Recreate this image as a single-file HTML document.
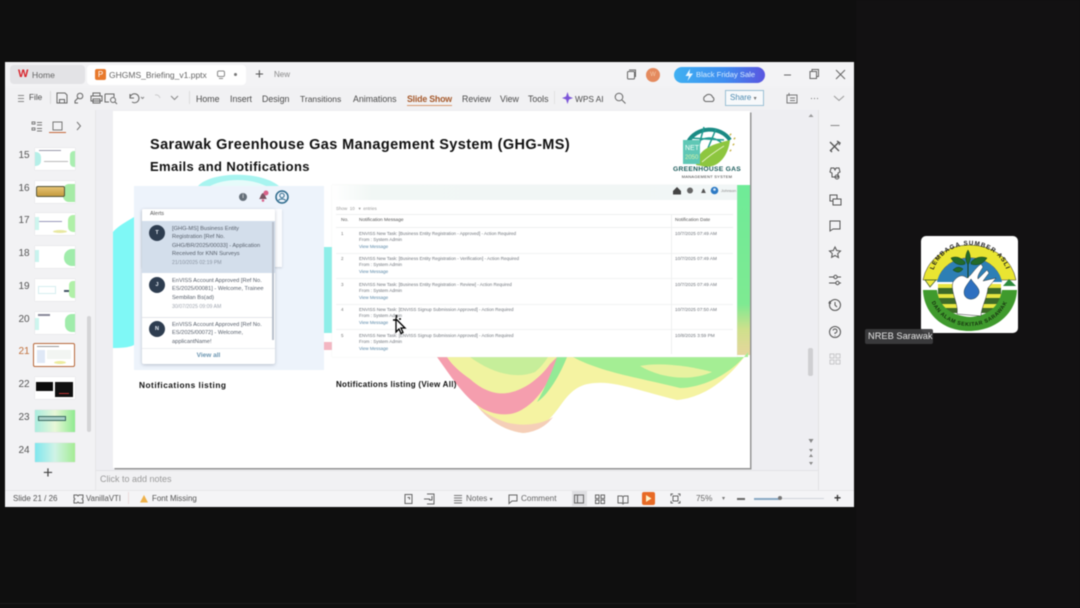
<!DOCTYPE html>
<html><head><meta charset="utf-8"><style>
html,body{margin:0;padding:0;background:#0f0f0f;width:1080px;height:608px;overflow:hidden}
*{box-sizing:border-box}
body{font-family:"Liberation Sans",sans-serif;position:relative}
.a{position:absolute;white-space:nowrap}
#root{position:absolute;left:0;top:0;width:1080px;height:608px;filter:blur(.4px)}
.t{font-size:8.8px;color:#4a4a4a;line-height:12px}
.n{font-size:10px;color:#555;line-height:12px;left:18px;width:12px;text-align:center}
.th{position:absolute;left:35px;width:40px;height:22px;background:#fff;overflow:hidden;box-shadow:0 0 1px #ccc}
.nm{font-size:5.7px;line-height:6.3px;color:#58606c;white-space:nowrap;position:absolute}
.rm{font-size:4.5px;line-height:6.4px;color:#6e737a;white-space:nowrap;position:absolute;left:359px}
.rm i{font-style:normal;color:#5a88a8}
.rd{font-size:4.7px;color:#6e737a;position:absolute;left:675px;white-space:nowrap}
.ri{font-size:4.5px;color:#777;position:absolute;left:341px}
svg{position:absolute;overflow:visible}
</style></head><body><div id="root">
<!-- app window -->
<div class="a" style="left:5px;top:62px;width:849px;height:445px;background:#f1f1f3"></div>
<div class="a" style="left:5px;top:62px;width:849px;height:25px;background:#f3f3f5"></div>
<div class="a" style="left:10px;top:65px;width:75px;height:19px;background:#e3e3e6;border-radius:4px"></div>
<div class="a" style="left:87px;top:65px;width:159px;height:20px;background:#fff;border-radius:4px"></div>
<div class="a" style="left:18px;top:69px;font-size:11px;font-weight:bold;color:#d8242c;line-height:11px">W</div>
<div class="a t" style="left:32px;top:69px;font-size:8.6px;color:#666">Home</div>
<div class="a" style="left:95px;top:69px;width:11px;height:11px;background:#e8792c;border-radius:2px;color:#fff;font-size:8px;line-height:11px;text-align:center">P</div>
<div class="a t" style="left:109px;top:69px;font-size:8.5px;color:#666">GHGMS_Briefing_v1.pptx</div>
<svg style="left:216px;top:70px" width="10" height="10" fill="none" stroke="#8a8a8a"><rect x="1.500" y="1" width="7" height="5.500" rx="1.500"/><path d="M3 8.500h4"/></svg>
<div class="a" style="left:234px;top:73px;width:3px;height:3px;background:#777;border-radius:50%"></div>
<div class="a" style="left:255px;top:67px;font-size:15px;color:#555;line-height:15px">+</div>
<div class="a t" style="left:274px;top:69px;font-size:8px;color:#888">New</div>
<svg style="left:626px;top:69px" width="11" height="11" fill="none" stroke="#666"><rect x="1.500" y="2.500" width="7" height="7.500" rx="1"/><path d="M3 1h6.500v7"/></svg>
<div class="a" style="left:646px;top:68px;width:14px;height:14px;border-radius:50%;background:#e48a5e;color:#f6c9a8;font-size:6px;line-height:14px;text-align:center">W</div>
<div class="a" style="left:674px;top:67px;width:91px;height:16px;border-radius:8px;background:linear-gradient(90deg,#3fb0f2,#3f8ef0 55%,#5a55e0);color:#d8ecff;font-size:7.600px;line-height:16px;padding-left:22px">Black Friday Sale</div>
<svg style="left:684px;top:69px" width="10" height="12"><path d="M6 0L1.500 7H5L3.500 12 9 4.500H5.500z" fill="#e8f6ff"/></svg>
<svg style="left:780px;top:68px" width="66" height="13" fill="none" stroke="#666"><path d="M4 7h7"/><rect x="30" y="3.500" width="6.500" height="7"/><path d="M32 3.500V1.500h6.500v7h-2"/><path d="M56 2l9 9M65 2l-9 9"/></svg>
<!-- ribbon -->
<svg style="left:17px;top:94px" width="8" height="9" stroke="#888"><path d="M1 1.500h6M1 4.500h6M1 7.500h6"/></svg>
<div class="a t" style="left:29px;top:92px;font-size:8.200px">File</div>
<div class="a" style="left:50px;top:91px;width:1px;height:13px;background:#ddd"></div>
<svg style="left:55px;top:91px" width="125" height="14" fill="none" stroke="#666"><path d="M2 2h8l2 2v8H2zM4.500 12V8.500h5V12"/><circle cx="25" cy="5" r="2.800"/><path d="M23 7l-3 3v2h3"/><path d="M38 5V2h7v3M36 5h11v5H36zM38 8h7v4h-7z"/><path d="M50 3h9v3M50 3v8h4"/><circle cx="58" cy="9" r="2.500"/><path d="M60 11l2 2"/><path d="M75 3v4h4M75 7a4.500 4.500 0 1 1 2 4" /><path d="M86 6l1.500 1.500L89 6" stroke="#888"/><path d="M100 4a4 4 0 0 1 5 3" stroke="#ccc"/><path d="M116 5l3.500 3.500L123 5" stroke="#888"/></svg>
<div class="a" style="left:189px;top:91px;width:1px;height:13px;background:#ddd"></div>
<div class="a t" style="left:196px;top:93px">Home</div>
<div class="a t" style="left:230px;top:93px">Insert</div>
<div class="a t" style="left:262px;top:93px">Design</div>
<div class="a t" style="left:300px;top:93px;font-size:8.500px">Transitions</div>
<div class="a t" style="left:353px;top:93px">Animations</div>
<div class="a t" style="left:407px;top:93px;font-weight:bold;color:#a65a2c;letter-spacing:-.2px">Slide Show</div>
<div class="a" style="left:407px;top:105px;width:45px;height:1px;background:#d89a70"></div>
<div class="a t" style="left:462px;top:93px">Review</div>
<div class="a t" style="left:500px;top:93px">View</div>
<div class="a t" style="left:528px;top:93px">Tools</div>
<div class="a" style="left:554px;top:91px;width:1px;height:13px;background:#e2e2e2"></div>
<svg style="left:562px;top:92px" width="11" height="12"><path d="M5.500 0L7 4.500 11 6 7 7.500 5.500 12 4 7.500 0 6 4 4.500z" fill="#7c55d8"/></svg>
<div class="a t" style="left:575px;top:93px;font-size:8.300px">WPS AI</div>
<svg style="left:614px;top:92px" width="12" height="12" fill="none" stroke="#666"><circle cx="5" cy="5" r="3.800"/><path d="M8 8l3.500 3.500"/></svg>
<svg style="left:702px;top:92px" width="13" height="12" fill="none" stroke="#666"><path d="M3.500 9.500a3 3 0 0 1 0-5.500 4 4 0 0 1 7 1 2.500 2.500 0 0 1 0 4.500z"/></svg>
<div class="a" style="left:725px;top:90px;width:39px;height:16px;border:1px solid #9cc0d4;background:#f7f9fb;color:#4c8ab0;font-size:8px;line-height:14px;padding-left:4px">Share <span style="font-size:6px;color:#777">&#9662;</span></div>
<svg style="left:785px;top:92px" width="60" height="13" fill="none" stroke="#777"><path d="M2 3h10v8H2zM4 1v3M5 6h5M5 8.500h5"/><path d="M26 6.500h1M29 6.500h1M32 6.500h1"/><path d="M49 4l5 4.500L59 4" stroke="#999"/></svg>
<!-- left pane -->
<div class="a" style="left:5px;top:110px;width:91px;height:380px;background:#f2f2f4;border-right:1px solid #e6e6e8"></div>
<svg style="left:31px;top:120px" width="55" height="13" fill="none" stroke="#777"><path d="M1 2h3v2H1zM1 8h3v2H1zM6 2.500h5M6 5h5M6 8.500h5M6 11h5" stroke-width=".9"/><rect x="22" y="2" width="9" height="8"/><path d="M46 2l3.500 4L46 10"/></svg>
<div class="a" style="left:49px;top:132px;width:17px;height:1px;background:#c5683a"></div>
<div class="a n" style="top:150px">15</div><div class="a n" style="top:183px">16</div><div class="a n" style="top:215px">17</div><div class="a n" style="top:248px">18</div><div class="a n" style="top:281px">19</div><div class="a n" style="top:314px">20</div><div class="a n" style="top:346px;color:#c0703c">21</div><div class="a n" style="top:379px">22</div><div class="a n" style="top:412px">23</div><div class="a n" style="top:445px">24</div>
<div class="th" style="top:148px"><div class="a" style="left:0;top:4px;width:6px;height:14px;background:#b5efe8;border-radius:0 5px 5px 0"></div><div class="a" style="right:0;top:3px;width:5px;height:16px;background:#a9eeb0;border-radius:4px 0 0 4px"></div><div class="a" style="left:4px;top:2px;width:22px;height:1px;background:#99a"></div><div class="a" style="left:9px;top:13px;width:24px;height:1px;background:#bbb"></div></div>
<div class="th" style="top:181px"><div class="a" style="right:0;top:3px;width:12px;height:18px;background:#a6eba6;border-radius:6px 0 0 6px"></div><div class="a" style="left:1px;top:5px;width:29px;height:11px;background:linear-gradient(#e6c373,#c49a3e);border:1px solid #55553a;border-radius:2px"></div></div>
<div class="th" style="top:213px"><div class="a" style="right:0;top:2px;width:7px;height:17px;background:#b0f0a8;border-radius:5px 0 0 5px"></div><div class="a" style="left:3px;top:8px;width:24px;height:1px;background:#99b"></div><div class="a" style="left:18px;top:17px;width:14px;height:3px;background:#e8e8a0;border-radius:50%"></div><div class="a" style="left:0;top:4px;width:4px;height:13px;background:#cdf5ee"></div></div>
<div class="th" style="top:246px"><div class="a" style="right:0;top:3px;width:11px;height:17px;background:#a0ecab;border-radius:8px 0 0 8px"></div><div class="a" style="left:0;top:4px;width:4px;height:12px;background:#c8f3ee"></div></div>
<div class="th" style="top:279px"><div class="a" style="right:0;top:2px;width:6px;height:17px;background:#b0f0a8;border-radius:4px 0 0 4px"></div><div class="a" style="left:29px;top:11px;width:5px;height:2px;background:#456"></div><div class="a" style="left:3px;top:7px;width:18px;height:8px;border:1px solid #d6eef0"></div></div>
<div class="th" style="top:312px"><div class="a" style="right:0;top:2px;width:10px;height:18px;background:#a0ecab;border-radius:7px 0 0 7px"></div><div class="a" style="left:3px;top:2px;width:12px;height:2px;background:#889"></div><div class="a" style="left:0;top:6px;width:4px;height:12px;background:#cdf5ee"></div></div>
<div class="a" style="left:33px;top:343px;width:42px;height:24px;border:1.500px solid #b8683a;border-radius:2px;background:#fff"><div class="a" style="left:3px;top:6px;width:8px;height:13px;background:#dfe8f6"></div><div class="a" style="left:13px;top:6px;width:24px;height:9px;background:#f2f5f2"></div><div class="a" style="left:3px;top:2px;width:22px;height:1px;background:#999"></div><div class="a" style="left:20px;top:17px;width:12px;height:3px;background:#ecec9c;border-radius:50%"></div></div>
<div class="th" style="top:377px"><div class="a" style="left:1px;top:5px;width:17px;height:9px;background:#0a0a0a"></div><div class="a" style="left:20px;top:5px;width:18px;height:15px;background:#111"></div><div class="a" style="left:24px;top:16px;width:10px;height:1px;background:#b33"></div></div>
<div class="th" style="top:410px;background:linear-gradient(90deg,#a9ecdf,#e8f7d8 50%,#8fea90)"><div class="a" style="left:3px;top:6px;width:28px;height:5px;background:#a8d0c8;border:1px solid #3a6a60"></div></div>
<div class="th" style="top:443px;height:19px;background:linear-gradient(90deg,#7fe6ee,#d0f3e6 50%,#a5ec94)"></div>
<div class="a" style="left:87px;top:316px;width:4px;height:116px;background:#d4d4d6;border-radius:2px"></div>
<div class="a" style="left:43px;top:464px;font-size:17px;line-height:17px;color:#444">+</div>
<!-- canvas -->
<div class="a" style="left:96px;top:110px;width:722px;height:360px;background:#eeeef2"></div>
<div class="a" style="left:96px;top:470px;width:722px;height:20px;background:#f1f1f3;border-top:1px solid #e4e4e6"></div>
<div class="a" style="left:100px;top:473px;font-size:9px;line-height:12px;color:#9a9a9a">Click to add notes</div>
<div class="a" style="left:808px;top:348px;width:5px;height:28px;background:#cfcfd2;border-radius:2px"></div>
<svg style="left:808px;top:113px" width="6" height="6"><path d="M.5 4L3 1l2.500 3" fill="#999"/></svg>
<svg style="left:808px;top:437px" width="6" height="28" fill="#888"><path d="M.5 2h5L3 6z"/><path d="M1 12h4L3 15zM1 13V12M1 20l2-3 2 3zM1 25h4L3 28z"/></svg>
<!-- slide -->
<div class="a" style="left:113px;top:111px;width:637px;height:357px;background:#fff;box-shadow:1.500px 1.500px 0 #959595;overflow:hidden">
<svg style="left:0;top:0" width="637" height="357" viewBox="113 111 637 357">
<defs><linearGradient id="gs" x1="0" x2="0" y1="0" y2="1"><stop offset="0" stop-color="#6feb98"/><stop offset=".7" stop-color="#7eea92"/><stop offset=".85" stop-color="#cfe08c"/><stop offset="1" stop-color="#e6d69c"/></linearGradient></defs>
<path d="M113 232C118 226 126 222 134 217L134 345C128 348 120 348 113 348z" fill="#7ff8f6"/>
<path d="M198 186C210 172 260 170 279 186z" fill="#a8f4f0"/>
<path d="M210 186C225 178 250 178 266 186z" fill="#e6fbfa"/>
<rect x="324" y="247" width="8" height="86" fill="#8eeee8"/>
<rect x="324" y="342" width="8" height="8" fill="#f3b6c2"/>
<rect x="737" y="185" width="13" height="170" fill="url(#gs)"/>
<!-- wave outer -->
<path d="M437 357C450 372 463 387 472 398 482 415 500 430 523 433 538 432 550 420 560 406 570 392 578 384 595 383 615 381 640 391 677 400 700 398 725 384 748 352L748 357z" fill="#f5f3a2"/>
<!-- peach lower rim -->
<path d="M478 407C488 420 505 431 523 433 538 432 548 424 553 417 540 426 515 427 500 420 490 416 484 412 478 407z" fill="#f5cfb8"/>
<!-- upper yellow/green -->
<path d="M447 357C460 372 480 388 497 396 512 398 535 382 550 364L557 357z" fill="#f0f3a0"/>
<path d="M470 357C490 372 515 380 535 372 540 368 545 362 548 357z" fill="#c6ee9a"/>
<!-- pink -->
<path d="M437 357C450 375 462 394 477 405 490 415 510 418 523 409 537 401 551 382 557 357L550 364C540 378 525 389 512 392 495 397 480 388 470 379 460 372 452 365 447 357z" fill="#f59eae"/>
<!-- green strip -->
<path d="M557 357H567C560 375 548 395 537 402 545 388 552 372 557 357z" fill="#93ea96"/>
<path d="M573 357C600 372 640 378 680 388 700 388 730 376 748 352L748 357z" fill="#a4ee94"/>
<path d="M640 366C660 378 690 382 712 372 690 366 660 362 640 366z" fill="#e8f2a0"/>
</svg>
</div>
<div class="a" style="left:150px;top:137px;font-size:14.500px;line-height:17px;font-weight:bold;color:#111;letter-spacing:.4px">Sarawak Greenhouse Gas Management System (GHG-MS)</div>
<div class="a" style="left:150px;top:159px;font-size:13px;line-height:16px;font-weight:bold;color:#111;letter-spacing:.37px">Emails and Notifications</div>
<!-- logo -->
<svg style="left:680px;top:122px" width="60" height="56" viewBox="0 0 60 56">
<path d="M8 20A24 22 0 0 1 50 18" fill="none" stroke="#1a8a84" stroke-width="4"/>
<path d="M13 26A17 15 0 0 1 44 24M24 5l-6 22M36 7L28 26M10 16l34 2" fill="none" stroke="#1f9a90" stroke-width="1.500"/>
<path d="M16 43C18 26 34 22 50 18 48 36 36 48 22 44z" fill="#8dc63f"/>
<path d="M22 40C30 33 36 29 44 24" stroke="#e8f4c8" fill="none"/>
<rect x="3" y="18" width="17" height="24" fill="#5fc7b5"/>
<path d="M50 12l1 1M54 16l1 1M53 22l1 1M50 28l1 1" stroke="#c8b44a" stroke-width="2"/>
<text x="5" y="28" font-family="Liberation Sans" font-size="7" fill="#f2fff8">NET</text>
<text x="5" y="37" font-family="Liberation Sans" font-size="6" fill="#d8f2a8">2050</text>
</svg>
<div class="a" style="left:672px;top:166px;width:70px;text-align:center;font-size:6.700px;line-height:8px;color:#1a5a5a;font-weight:bold;letter-spacing:.3px">GREENHOUSE GAS</div>
<div class="a" style="left:672px;top:174px;width:70px;text-align:center;font-size:4px;line-height:5px;color:#333;letter-spacing:.25px">MANAGEMENT SYSTEM</div>
<!-- left screenshot -->
<div class="a" style="left:134px;top:186px;width:190px;height:184px;background:#edf3fb"></div>
<div class="a" style="left:142px;top:209px;width:140px;height:58px;background:#fbfcfe;box-shadow:0 1px 2px rgba(90,100,120,.25)"></div>
<div class="a" style="left:239px;top:193px;width:8px;height:8px;border-radius:50%;background:#66707a;color:#fff;font-size:6px;line-height:8px;text-align:center">i</div>
<svg style="left:258px;top:190px" width="11" height="13"><path d="M1 9c1.500-1 1.500-5 4-6 2.500 1 2.500 5 4 6z" fill="#7a5563"/><circle cx="8" cy="3" r="2.500" fill="#d8628a"/><circle cx="5" cy="10.500" r="1.300" fill="#d8628a"/></svg>
<svg style="left:275px;top:190px" width="14" height="14" fill="none"><circle cx="7" cy="7" r="6" stroke="#2d6a8c" stroke-width="1.500"/><circle cx="7" cy="5.500" r="2.200" stroke="#2d6a8c"/><path d="M3.500 10.500c1-2 6-2 7 0" stroke="#2d6a8c"/></svg>
<div class="a" style="left:142px;top:209px;width:133px;height:155px;background:#fff;box-shadow:0 1px 3px rgba(90,100,120,.35);border-radius:2px"></div>
<div class="a" style="left:150px;top:211px;font-size:5.500px;line-height:7px;color:#555">Alerts</div>
<div class="a" style="left:142px;top:221px;width:133px;height:52px;background:#d3deeb"></div>
<div class="a" style="left:272px;top:222px;width:2px;height:118px;background:#b8c0cc"></div>
<div class="a" style="left:142px;top:317px;width:130px;height:1px;background:#e4e6ea"></div>
<div class="a" style="left:142px;top:348px;width:133px;height:1px;background:#eceef1"></div>
<div class="a" style="left:149px;top:225px;width:16px;height:16px;border-radius:50%;background:#2e3d50;color:#e8eef6;font-size:5.500px;line-height:16px;text-align:center;font-weight:bold">T</div>
<div class="a" style="left:149px;top:277px;width:16px;height:16px;border-radius:50%;background:#2e3d50;color:#e8eef6;font-size:5.500px;line-height:16px;text-align:center;font-weight:bold">J</div>
<div class="a" style="left:149px;top:321px;width:16px;height:16px;border-radius:50%;background:#2e3d50;color:#e8eef6;font-size:5.500px;line-height:16px;text-align:center;font-weight:bold">N</div>
<div class="nm" style="left:172px;top:225px;line-height:8.400px">[GHG-MS] Business Entity<br>Registration [Ref No.<br>GHG/BR/2025/00033] - Application<br>Received for KNN Surveys</div>
<div class="nm" style="left:172px;top:260px;font-size:5.200px;color:#8a94a2">21/10/2025 02:19 PM</div>
<div class="nm" style="left:172px;top:277px;line-height:8.400px">EnVISS Account Approved [Ref No.<br>ES/2025/00081] - Welcome, Trainee<br>Sembilan Bs(ad)</div>
<div class="nm" style="left:172px;top:304px;font-size:5.200px;color:#a0a6b0">30/07/2025 09:09 AM</div>
<div class="nm" style="left:172px;top:321px;line-height:8.400px">EnVISS Account Approved [Ref No.<br>ES/2025/00072] - Welcome,<br>applicantName!</div>
<div class="a" style="left:142px;top:352px;width:133px;text-align:center;font-size:6.500px;line-height:8px;font-weight:bold;color:#6a94b0">View all</div>
<div class="a" style="left:139px;top:380px;font-size:8.300px;line-height:10px;font-weight:bold;color:#111;letter-spacing:.5px">Notifications listing</div>
<!-- right screenshot -->
<div class="a" style="left:332px;top:185px;width:405px;height:172px;background:#fff;box-shadow:0 0 1px #e0e6e0"></div>
<div class="a" style="left:332px;top:185px;width:405px;height:15px;background:linear-gradient(90deg,#fff,#f1f7f5 10%,#f1f6f6)"></div>
<svg style="left:672px;top:186px" width="48" height="9"><path d="M1 5l4-4 4 4v3.500H1z" fill="#444"/><circle cx="18" cy="4.500" r="3" fill="#666"/><path d="M29 7c1-1 1-3 2.500-4.500C33 4 33 6 34 7z" fill="#555"/><circle cx="42.500" cy="4.500" r="3.800" fill="#2d7ac4"/><circle cx="42.500" cy="3.500" r="1.300" fill="#dbeafa"/></svg>
<div class="a" style="left:721px;top:188px;font-size:4px;line-height:5px;color:#888">Johnson</div>
<div class="ri" style="left:336px;top:206px;color:#999">Show &nbsp;10 &nbsp;&nbsp;&#9662; &nbsp;entries</div>
<div class="a" style="left:336px;top:214px;width:397px;height:1px;background:#eef0f0"></div>
<div class="a" style="left:336px;top:227px;width:397px;height:1px;background:#eef0f0"></div>
<div class="a" style="left:336px;top:253px;width:397px;height:1px;background:#f2f3f3"></div>
<div class="a" style="left:336px;top:278px;width:397px;height:1px;background:#f2f3f3"></div>
<div class="a" style="left:336px;top:304px;width:397px;height:1px;background:#f2f3f3"></div>
<div class="a" style="left:336px;top:329px;width:397px;height:1px;background:#f2f3f3"></div>
<div class="a" style="left:671px;top:214px;width:1px;height:140px;background:#eef0f0"></div>
<div class="a" style="left:341px;top:218px;font-size:4.800px;color:#555;line-height:6px">No.</div>
<div class="a" style="left:359px;top:218px;font-size:4.800px;color:#555;line-height:6px">Notification Message</div>
<div class="a" style="left:675px;top:218px;font-size:4.800px;color:#555;line-height:6px">Notification Date</div>
<div class="ri" style="top:231px">1</div><div class="ri" style="top:256px">2</div><div class="ri" style="top:282px">3</div><div class="ri" style="top:307px">4</div><div class="ri" style="top:333px">5</div>
<div class="rm" style="top:231px">ENVISS New Task: [Business Entity Registration - Approved] - Action Required<br>From : System Admin<br><i>View Message</i></div>
<div class="rm" style="top:256px">ENVISS New Task: [Business Entity Registration - Verification] - Action Required<br>From : System Admin<br><i>View Message</i></div>
<div class="rm" style="top:282px">ENVISS New Task: [Business Entity Registration - Review] - Action Required<br>From : System Admin<br><i>View Message</i></div>
<div class="rm" style="top:307px">ENVISS New Task: [ENVISS Signup Submission Approved] - Action Required<br>From : System Admin<br><i>View Message</i></div>
<div class="rm" style="top:333px">ENVISS New Task: [ENVISS Signup Submission Approved] - Action Required<br>From : System Admin<br><i>View Message</i></div>
<div class="rd" style="top:231px">10/7/2025 07:49 AM</div><div class="rd" style="top:256px">10/7/2025 07:49 AM</div><div class="rd" style="top:282px">10/7/2025 07:49 AM</div><div class="rd" style="top:307px">10/7/2025 07:50 AM</div><div class="rd" style="top:333px">10/8/2025 3:59 PM</div>
<div class="a" style="left:336px;top:380px;font-size:8px;line-height:10px;font-weight:bold;color:#111;letter-spacing:.27px">Notifications listing (View All)</div>
<!-- cursor -->
<svg style="left:391px;top:315px" width="16" height="20"><path d="M5 4l0 13 3-3 2 4.500 2-1-2-4.500 4 0z" fill="#fff" stroke="#000" stroke-width="1.300"/><path d="M5.500 0v3M2 5h2.500M8 4h2" stroke="#000" stroke-width="1.500"/></svg>
<!-- right toolbar -->
<div class="a" style="left:818px;top:110px;width:36px;height:380px;background:#f2f2f4;border-left:1px solid #e2e2e4"></div>
<svg style="left:827px;top:120px" width="16" height="250" fill="none" stroke="#555"><path d="M3.500 5.500h9" stroke="#888"/>
<path d="M3 22l9 9M12 22l-9 9M10 21l3 2-1 2M3 30l2 2" stroke-width="1.300"/>
<path d="M4 48h3l1 2 1-2h3l1 4-2 1v4H5v-4l-2-1z"/><circle cx="10" cy="57" r="2"/>
<rect x="3" y="75" width="7" height="6"/><rect x="6" y="79" width="8" height="6" fill="#f2f2f4"/>
<path d="M3 101h10v8H6l-3 2z"/>
<path d="M8 127l1.700 3.500 3.800.5-2.800 2.700.7 3.800L8 135.500l-3.400 1.800.7-3.800L2.500 131l3.800-.5z"/>
<path d="M2 157h5M10 157h4M2 163h7M12 163h2"/><circle cx="8.500" cy="157" r="1.700"/><circle cx="10.500" cy="163" r="1.700"/>
<circle cx="8" cy="185" r="5.500"/><path d="M8 182v3l2 2M3 181l-1 2 2 .5"/>
<circle cx="8" cy="212" r="5.500"/><path d="M6 210.500a2 2 0 1 1 2 2.500v1M8 215.500v.5"/>
<g stroke="#c8c8ca"><rect x="3" y="234" width="4" height="4"/><rect x="9" y="234" width="4" height="4"/><rect x="3" y="240" width="4" height="4"/><rect x="9" y="240" width="4" height="4"/></g></svg>
<!-- status bar -->
<div class="a" style="left:5px;top:490px;width:849px;height:17px;background:#f4f4f6;border-top:1px solid #e8e8ea"></div>
<div class="a" style="left:13px;top:493px;font-size:8px;line-height:12px;color:#555">Slide 21 / 26</div>
<svg style="left:73px;top:494px" width="11" height="10" fill="none" stroke="#666"><path d="M1 1h3l1 1 1-1h4v3l-1 1 1 1v3H6L5 8 4 9H1V6l1-1-1-1z"/></svg>
<div class="a" style="left:86px;top:493px;font-size:7.800px;line-height:12px;color:#555">VanillaVTI</div>
<div class="a" style="left:128px;top:492px;width:1px;height:12px;background:#ecdcdc"></div>
<svg style="left:139px;top:494px" width="10" height="10"><path d="M5 1l4 7.500H1z" fill="#eeb14a"/></svg>
<div class="a" style="left:152px;top:493px;font-size:7.900px;line-height:12px;color:#555">Font Missing</div>
<svg style="left:403px;top:493px" width="36" height="12" fill="none" stroke="#666"><rect x="2" y="1.500" width="7" height="9"/><path d="M4.500 4.500h2v2"/><path d="M24 1h7v10h-7M21 6h6M29 3v4h-3" /></svg>
<svg style="left:453px;top:494px" width="10" height="10" fill="none" stroke="#777"><path d="M1 1.500h8M1 4h8M1 6.500h8M1 9h8"/></svg>
<div class="a" style="left:466px;top:493px;font-size:8.200px;line-height:12px;color:#666">Notes <span style="font-size:6px">&#9662;</span></div>
<svg style="left:508px;top:494px" width="10" height="10" fill="none" stroke="#666"><path d="M1 1h8v6H4L1 9.500z"/></svg>
<div class="a" style="left:521px;top:493px;font-size:8.200px;line-height:12px;color:#666">Comment</div>
<div class="a" style="left:572px;top:491px;width:15px;height:15px;background:#dfdfe2"></div>
<svg style="left:574px;top:494px" width="70" height="10" fill="none" stroke="#666"><rect x="0.500" y="1" width="9" height="8"/><path d="M3.500 1v8"/><rect x="21.500" y="1" width="3.500" height="3.500"/><rect x="27" y="1" width="3.500" height="3.500"/><rect x="21.500" y="6" width="3.500" height="3.500"/><rect x="27" y="6" width="3.500" height="3.500"/><path d="M44 2h4l1 1 1-1h4v7h-4l-1 1-1-1h-4zM49 3v6"/></svg>
<div class="a" style="left:642px;top:492px;width:13px;height:13px;background:#e86a25;border-radius:2px"></div>
<svg style="left:645px;top:495px" width="7" height="7"><path d="M1 0l5.500 3.500L1 7z" fill="#fff2c8"/></svg>
<svg style="left:670px;top:493px" width="11" height="11" fill="none" stroke="#666"><path d="M1 3V1h2M8 1h2v2M10 8v2H8M3 10H1V8"/><rect x="3" y="3" width="5" height="5"/></svg>
<div class="a" style="left:696px;top:493px;font-size:8.200px;line-height:12px;color:#666">75%</div>
<div class="a" style="left:722px;top:493px;font-size:6px;line-height:12px;color:#777">&#9662;</div>
<div class="a" style="left:737px;top:498px;width:8px;height:1.500px;background:#666"></div>
<div class="a" style="left:754px;top:498px;width:70px;height:1px;background:#d0d4da"></div>
<div class="a" style="left:754px;top:498px;width:25px;height:1.500px;background:#88a8c4"></div>
<div class="a" style="left:778px;top:496px;width:4px;height:4px;border-radius:50%;background:#777"></div>
<div class="a" style="left:834px;top:492px;font-size:12px;line-height:13px;color:#333;font-weight:bold">+</div>
<!-- bottom strip -->
<div class="a" style="left:0;top:603px;width:1080px;height:1px;background:#1c1c1c"></div>
<!-- NREB tile -->
<div class="a" style="left:856px;top:0;width:224px;height:608px;background:#121112"></div>
<svg style="left:921px;top:236px" width="97" height="97" viewBox="0 0 97 97">
<rect width="97" height="97" rx="5" fill="#fff"/>
<path d="M2 44A47 41 0 0 1 95 44L80 44A32 27 0 0 0 17 44z" fill="#e9e532" stroke="#333" stroke-width=".5"/>
<path d="M16 46A33 29 0 0 1 81 46z" fill="#2d7fb5"/>
<path d="M4 44L15 44 9 51z" fill="#f0ea40" stroke="#3a5a20" stroke-width=".7"/>
<path d="M82 50L88 43 95 50z" fill="#2b8a3c"/>
<rect x="17" y="46" width="63" height="36" fill="#fff"/>
<path d="M17 48h63v4H17zM17 58h63v4H17zM17 68h63v4H17z" fill="#e8e540"/>
<path d="M17 52h63v6H17zM17 62h63v6H17zM17 72h63v5H17z" fill="#3d6a28"/>
<path d="M2 54h14C18 72 32 80 49 81 66 80 78 72 81 54h15C95 78 74 95 48 95 22 95 3 78 2 54z" fill="#3f9a2d"/>
<path d="M32 46C38 38 42 39 46 42 50 40 54 32 60 28L62 31C59 36 56 40 57 43L66 34 68 37 62 45 75 42 67 52C66 62 60 72 60 80L36 78C38 68 29 56 32 46z" fill="#fff" stroke="#333" stroke-width=".5"/>
<path d="M50 43C46 49 41 54 44 60 47 65 56 64 58 57 59 52 53 48 50 43z" fill="#2e70c0" stroke="#134" stroke-width=".5"/>
<path d="M47 14C44 19 44 24 47 29 50 24 50 19 47 14zM44 26C39 21 35 20 30 22 33 28 39 30 44 28zM50 26C55 21 60 20 66 22 62 28 56 30 50 28zM42 33C38 30 35 31 32 34 36 37 39 37 42 33z" fill="#236b2a" stroke="#143d18" stroke-width=".5"/>
<path d="M47 28V42" stroke="#143d18"/>
<defs><path id="tp" d="M11 44A38 35 0 0 1 87 44"/><path id="bp" d="M8 58C12 78 30 90 48 90 68 90 84 78 89 58"/></defs>
<text font-family="Liberation Sans" font-size="6.200" font-weight="bold" fill="#1a1a1a" letter-spacing="1" text-anchor="middle"><textPath href="#tp" startOffset="50%">LEMBAGA SUMBER ASLI</textPath></text>
<text font-family="Liberation Sans" font-size="5.400" font-weight="bold" fill="#15300f" letter-spacing=".5" text-anchor="middle"><textPath href="#bp" startOffset="50%">DAN ALAM SEKITAR SARAWAK</textPath></text>
</svg>
<div class="a" style="left:865px;top:329px;width:68px;height:15px;background:rgba(60,60,62,.95);border-radius:2px;color:#e6e6e6;font-size:9.300px;line-height:15px;padding-left:3px">NREB Sarawak</div>
</div></body></html>
